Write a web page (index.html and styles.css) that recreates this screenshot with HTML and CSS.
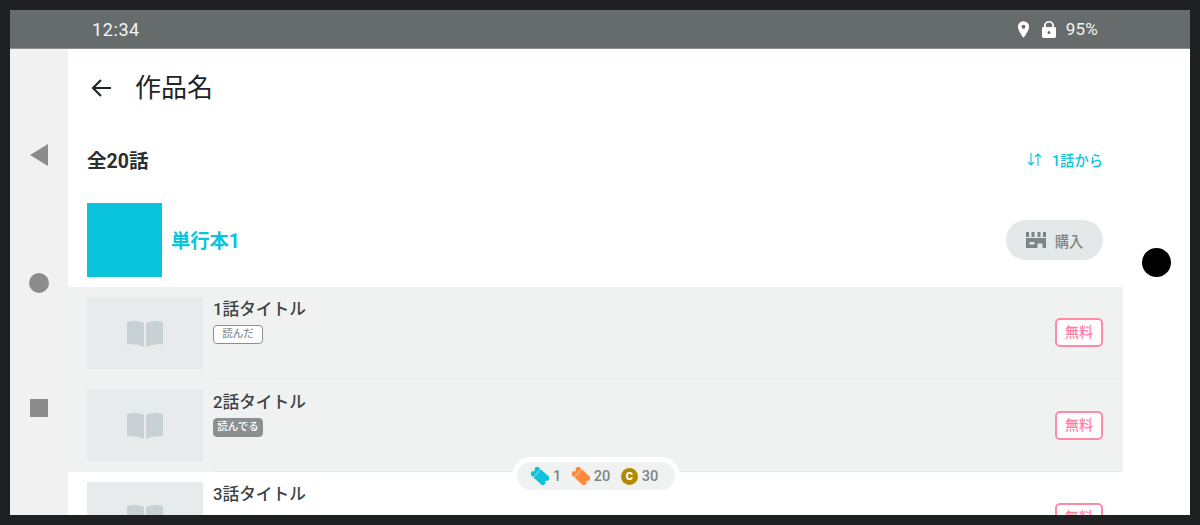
FILE: index.html
```html
<!DOCTYPE html>
<html lang="ja">
<head>
  <meta charset="UTF-8">
  <meta name="viewport" content="width=device-width, initial-scale=1.0">
  <title>作品名</title>
  <link rel="stylesheet" href="styles.css">
</head>
<body>
  <div class="screen">
    <div class="status-bar">
      <span class="status-time">12:34</span>
      <div class="status-right">
        <svg class="status-pin" viewBox="0 0 14 18"><path fill="#fff" fill-rule="evenodd" d="M7 0a6 6 0 0 0-6 6c0 4.300 6 12 6 12s6-7.700 6-12a6 6 0 0 0-6-6zm0 4a2.100 2.100 0 1 1 0 4.200 2.100 2.100 0 0 1 0-4.200z"/></svg>
        <svg class="status-lock" viewBox="0 0 14 17"><path fill="#fff" fill-rule="evenodd" d="M2 6V4.500a5 4.500 0 0 1 10 0V6h.6c.8 0 1.400.6 1.400 1.400v8.200c0 .8-.6 1.400-1.400 1.400H1.400C.6 17 0 16.400 0 15.600V7.400C0 6.600.6 6 1.400 6H2zm1.800 0h6.400V4.500a3.200 2.900 0 0 0-6.400 0V6zM7 10a1.500 1.500 0 1 0 0 3 1.500 1.500 0 0 0 0-3z"/></svg>
        <span class="status-battery">95%</span>
      </div>
    </div>

    <div class="main">
      <div class="nav-bar">
        <svg class="nav-back" viewBox="0 0 18 22"><polygon fill="#8c8c8c" points="18,0 18,22 0,11"/></svg>
        <div class="nav-home"></div>
        <div class="nav-recent"></div>
      </div>

      <div class="content">
        <div class="toolbar">
          <svg class="back-arrow" viewBox="0 0 20 20"><path fill="none" stroke="#212424" stroke-width="2.200" d="M20 10H2M10 2l-8 8 8 8"/></svg>
          <h1 class="toolbar-title">作品名</h1>
        </div>

        <div class="list-head">
          <span class="list-count">全20話</span>
          <span class="list-sort">
            <svg class="sort-icon" viewBox="0 0 15 13"><path fill="none" stroke="#0ac4dc" stroke-width="1.100" d="M4 0v12M1 9l3 3 3-3M11 13V1M8 4l3-3 3 3"/></svg>
            1話から
          </span>
        </div>

        <div class="volume">
          <div class="volume-cover"></div>
          <span class="volume-title">単行本1</span>
          <button class="buy-button">
            <svg class="store-icon" viewBox="0 0 20 16"><path fill="#7c8686" fill-rule="evenodd" d="M0 0h3v5H0zM5.500 0h3v5h-3zM11.500 0h3v5h-3zM17 0h3v5h-3zM0 6h20v10h-3.500v-4.500h-5V16H0zM3.500 10v2.500h5V10z"/></svg>
            購入
          </button>
        </div>

        <div class="episode episode-read">
          <div class="episode-thumb">
            <svg class="book-icon" viewBox="0 0 36 27"><path fill="#c8d1d3" d="M0 2.500C5 .5 11 .5 17 3v24C11 24.500 5 24 1 24.500c-.6 0-1-.4-1-1V2.500zM36 2.500C31 .5 25 .5 19 3v24c6-2.500 12-3 16-2.500.6 0 1-.4 1-1V2.500z"/></svg>
          </div>
          <div class="episode-body">
            <div class="episode-text">
              <div class="episode-title">1話タイトル</div>
              <span class="tag tag-done">読んだ</span>
            </div>
            <span class="price">無料</span>
          </div>
        </div>

        <div class="episode episode-read">
          <div class="episode-thumb">
            <svg class="book-icon" viewBox="0 0 36 27"><path fill="#c8d1d3" d="M0 2.500C5 .5 11 .5 17 3v24C11 24.500 5 24 1 24.500c-.6 0-1-.4-1-1V2.500zM36 2.500C31 .5 25 .5 19 3v24c6-2.500 12-3 16-2.500.6 0 1-.4 1-1V2.500z"/></svg>
          </div>
          <div class="episode-body">
            <div class="episode-text">
              <div class="episode-title">2話タイトル</div>
              <span class="tag tag-reading">読んでる</span>
            </div>
            <span class="price">無料</span>
          </div>
        </div>

        <div class="episode">
          <div class="episode-thumb">
            <svg class="book-icon" viewBox="0 0 36 27"><path fill="#c8d1d3" d="M0 2.500C5 .5 11 .5 17 3v24C11 24.500 5 24 1 24.500c-.6 0-1-.4-1-1V2.500zM36 2.500C31 .5 25 .5 19 3v24c6-2.500 12-3 16-2.500.6 0 1-.4 1-1V2.500z"/></svg>
          </div>
          <div class="episode-body">
            <div class="episode-text">
              <div class="episode-title">3話タイトル</div>
            </div>
            <span class="price">無料</span>
          </div>
        </div>
      </div>

      <div class="side">
        <div class="side-dot"></div>
      </div>

      <div class="wallet">
        <svg class="ticket" viewBox="0 0 18 18"><g transform="rotate(42 9 9)"><path fill="#0ac4dc" d="M0 3.500H18v4a1.500 1.500 0 0 0 0 3v4H0v-4a1.500 1.500 0 0 0 0-3z"/><path stroke="#f0f2f2" stroke-dasharray="1.500 1.500" d="M5 3.500v11"/></g></svg>
        <span class="wallet-num">1</span>
        <svg class="ticket" viewBox="0 0 18 18"><g transform="rotate(42 9 9)"><path fill="#ff8a3c" d="M0 3.500H18v4a1.500 1.500 0 0 0 0 3v4H0v-4a1.500 1.500 0 0 0 0-3z"/><path stroke="#f0f2f2" stroke-dasharray="1.500 1.500" d="M5 3.500v11"/></g></svg>
        <span class="wallet-num">20</span>
        <span class="coin">C</span>
        <span class="wallet-num">30</span>
      </div>
    </div>
  </div>
</body>
</html>
```

FILE: styles.css
```css
* {
  box-sizing: border-box;
}
body {
  margin: 0;
  height: 525px;
  padding: 10px;
  overflow: hidden;
  background-color: #1e2022;
  font-family: Roboto, "Noto Sans CJK JP", sans-serif;
}
.screen {
  display: flex;
  flex-direction: column;
  height: 505px;
  background: #ffffff;
  overflow: hidden;
}
.status-bar {
  flex: none;
  display: flex;
  align-items: center;
  justify-content: space-between;
  height: 39px;
  padding: 0 92px 0 82px;
  background-color: #666c6c;
  border-bottom: 1px solid #8a8f8f;
  color: #f4f5f5;
  font-size: 18px;
}
.status-time {
  letter-spacing: 0.6px;
}
.status-right {
  display: flex;
  align-items: center;
}
.status-pin {
  width: 13px;
  height: 17px;
  margin-right: 12px;
}
.status-lock {
  width: 14px;
  height: 17px;
  margin-right: 10px;
}
.status-battery {
  font-size: 17px;
  letter-spacing: 0.2px;
}
.main {
  position: relative;
  flex: 1;
  display: flex;
  min-height: 0;
}
.nav-bar {
  flex: none;
  width: 58px;
  display: flex;
  flex-direction: column;
  align-items: center;
  padding-top: 95px;
  background-color: #f1f1f1;
}
.nav-back {
  width: 18px;
  height: 22px;
  margin-right: 1px;
}
.nav-home {
  width: 20px;
  height: 20px;
  margin-top: 107px;
  border-radius: 50%;
  background-color: #8c8c8c;
}
.nav-recent {
  width: 18px;
  height: 18px;
  margin-top: 106px;
  background-color: #8c8c8c;
}
.content {
  flex: none;
  width: 1055px;
}
.toolbar {
  display: flex;
  align-items: center;
  height: 77px;
  padding-left: 23px;
}
.back-arrow {
  width: 20px;
  height: 20px;
}
.toolbar-title {
  margin: 1px 0 0 24px;
  font-size: 26px;
  font-weight: 400;
  line-height: 36px;
  color: #212424;
}
.list-head {
  display: flex;
  align-items: center;
  justify-content: space-between;
  height: 67px;
  padding: 0 20px 1px 19px;
}
.list-count {
  font-size: 19.500px;
  font-weight: 700;
  color: #2b2e2e;
}
.list-sort {
  display: flex;
  align-items: center;
  font-size: 14.300px;
  font-weight: 500;
  color: #0ac4dc;
}
.sort-icon {
  width: 15px;
  height: 13px;
  margin-right: 10px;
}
.volume {
  display: flex;
  align-items: center;
  height: 94px;
  padding: 10px 20px 10px 19px;
}
.volume-cover {
  width: 75px;
  height: 74px;
  background-color: #0ac4dc;
}
.volume-title {
  flex: 1;
  margin-left: 9px;
  font-size: 19.300px;
  font-weight: 700;
  color: #0ac4dc;
}
.buy-button {
  display: flex;
  align-items: center;
  justify-content: center;
  width: 97px;
  height: 40px;
  padding: 0;
  border: none;
  border-radius: 20px;
  background-color: #e4e8e8;
  color: #7c8686;
  font-family: inherit;
  font-size: 14.300px;
  font-weight: 500;
}
.store-icon {
  width: 20px;
  height: 16px;
  margin-right: 9px;
}
.episode {
  display: flex;
  height: 92.400px;
  padding: 10px 0 0 19px;
}
.episode-read {
  background-color: #f0f2f2;
}
.episode-thumb {
  flex: none;
  display: flex;
  align-items: center;
  justify-content: center;
  width: 116px;
  height: 72px;
  background-color: #e7ebec;
}
.book-icon {
  width: 36px;
  height: 27px;
}
.episode-body {
  flex: 1;
  display: flex;
  justify-content: space-between;
  margin: -10px 0 0 10px;
  padding: 11.400px 20px 0 0;
  border-bottom: 1px solid #e8ebeb;
}
.episode-title {
  font-size: 16.700px;
  font-weight: 500;
  line-height: 24px;
  color: #3e4444;
}
.tag {
  display: block;
  width: 50px;
  height: 19px;
  margin-top: 3px;
  border-radius: 4px;
  font-size: 10.500px;
  font-weight: 500;
  line-height: 16px;
  text-align: center;
}
.tag-done {
  border: 1.500px solid #8a9090;
  background: #ffffff;
  color: #8a9090;
}
.tag-reading {
  border: 1.500px solid #8a9090;
  background-color: #8a9090;
  color: #ffffff;
}
.price {
  align-self: flex-start;
  width: 48px;
  height: 29px;
  margin-top: 20px;
  border: 2px solid #ff8aa8;
  border-radius: 5px;
  background: #ffffff;
  color: #ff7fa2;
  font-size: 14px;
  font-weight: 500;
  line-height: 25px;
  text-align: center;
}
.side {
  flex: 1;
  display: flex;
  justify-content: center;
  padding-top: 199px;
}
.side-dot {
  width: 29px;
  height: 29px;
  border-radius: 50%;
  background: #000000;
}
.wallet {
  position: absolute;
  left: 502px;
  top: 408px;
  display: flex;
  align-items: center;
  width: 168px;
  height: 38px;
  padding-left: 14px;
  border: 5px solid #ffffff;
  border-radius: 19px;
  background-color: #f0f2f2;
  color: #7c8686;
  font-size: 14.500px;
  font-weight: 500;
}
.ticket {
  width: 18px;
  height: 18px;
}
.wallet-num {
  margin: 0 10.500px 0 4px;
}
.coin {
  display: flex;
  align-items: center;
  justify-content: center;
  width: 17px;
  height: 17px;
  border-radius: 50%;
  background-color: #b08a00;
  color: #ffffff;
  font-size: 11px;
  font-weight: 900;
}
```
